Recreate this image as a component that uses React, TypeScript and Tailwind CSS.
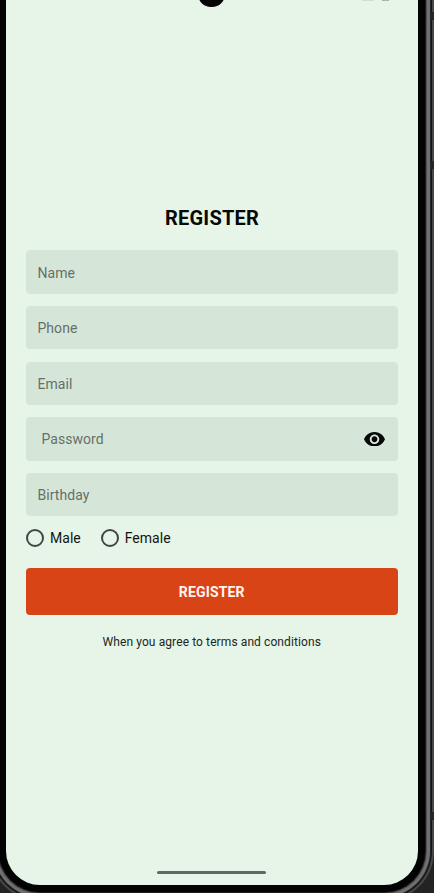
import React from 'react';

function Field({ label, inset = false, children }: { label: string; inset?: boolean; children?: React.ReactNode }) {
  return (
    <div className={`flex h-[43.4px] w-full items-center justify-between rounded-[4px] bg-[#d5e6d9] pr-[12.6px] ${inset ? 'pl-[15.5px]' : 'pl-[11.5px]'}`}>
      <span className="pt-px text-[14px] leading-5 tracking-[0.04px] text-[#657067]">{label}</span>
      {children}
    </div>
  );
}

function Radio({ label }: { label: string }) {
  return (
    <label className="flex items-center gap-[6px]">
      <span className="h-[18px] w-[18px] rounded-full border-2 border-[#424743]" />
      <span className="text-[14px] leading-5 tracking-[0.02px] text-[#111512]">{label}</span>
    </label>
  );
}

function EyeIcon() {
  return (
    <svg width="21" height="14.5" viewBox="1 4.5 22 15" preserveAspectRatio="none" fill="#050806">
      <path d="M12 4.5C7 4.5 2.73 7.61 1 12c1.73 4.39 6 7.5 11 7.5s9.27-3.11 11-7.5c-1.73-4.39-6-7.5-11-7.5zM12 17c-2.76 0-5-2.24-5-5s2.24-5 5-5 5 2.24 5 5-2.24 5-5 5zm0-8c-1.66 0-3 1.34-3 3s1.34 3 3 3 3-1.34 3-3-1.34-3-3-3z" />
    </svg>
  );
}

export default function App() {
  return (
    <div className="relative h-[893px] w-[434px] overflow-hidden bg-[#232323] pl-[6px] font-['Roboto',sans-serif]">
      <main className="relative flex h-[885px] w-[412px] flex-col rounded-b-[34px] bg-[#e7f5e8] px-5 pt-[206px] shadow-[0_0_0_7px_#030303,0_0_0_8px_#1c1c1c,0_0_0_9px_#505050,0_0_0_12px_#707070,0_0_0_13px_#262626,0_0_0_14px_#151515,0_0_0_16px_#484848]">
        <div className="absolute -top-[19px] left-[192px] h-[26px] w-[27px] rounded-full bg-[#050505]" />
        <div className="absolute left-[356px] top-0 h-px w-3 bg-[#d3dfd5]" />
        <div className="absolute left-[376px] top-0 h-px w-[7px] bg-[#aab5ac]" />

        <h1 className="h-6 text-center text-[20px] font-bold leading-6 tracking-[0.2px] text-[#060906]">REGISTER</h1>
        <form className="mt-[20.4px] flex w-[371.5px] flex-col">
          <div className="flex flex-col gap-[12.2px]">
            <Field label="Name" />
            <Field label="Phone" />
            <Field label="Email" />
            <Field label="Password" inset>
              <EyeIcon />
            </Field>
            <Field label="Birthday" />
          </div>
          <div className="mt-3 flex h-5 items-center gap-5">
            <Radio label="Male" />
            <Radio label="Female" />
          </div>
          <button type="button" className="mt-5 h-[47px] rounded-[4px] bg-[#d94416] text-[14px] font-bold leading-5 tracking-[0.15px] text-[#fff4ef]">
            REGISTER
          </button>
          <p className="mt-[18px] text-center text-[12px] leading-[18px] tracking-[0.1px] text-[#202721]">When you agree to terms and conditions</p>
        </form>
        <div className="absolute bottom-[11px] left-[151px] h-[3px] w-[109px] rounded-full bg-[#626963]" />
      </main>
      <div className="absolute right-0 top-[12px] h-2 w-[3px] bg-[#262626]" />
      <div className="absolute right-0 top-[161px] h-2 w-[3px] bg-[#262626]" />
      <div className="absolute right-0 top-[812px] h-2 w-[3px] bg-[#262626]" />
    </div>
  );
}
